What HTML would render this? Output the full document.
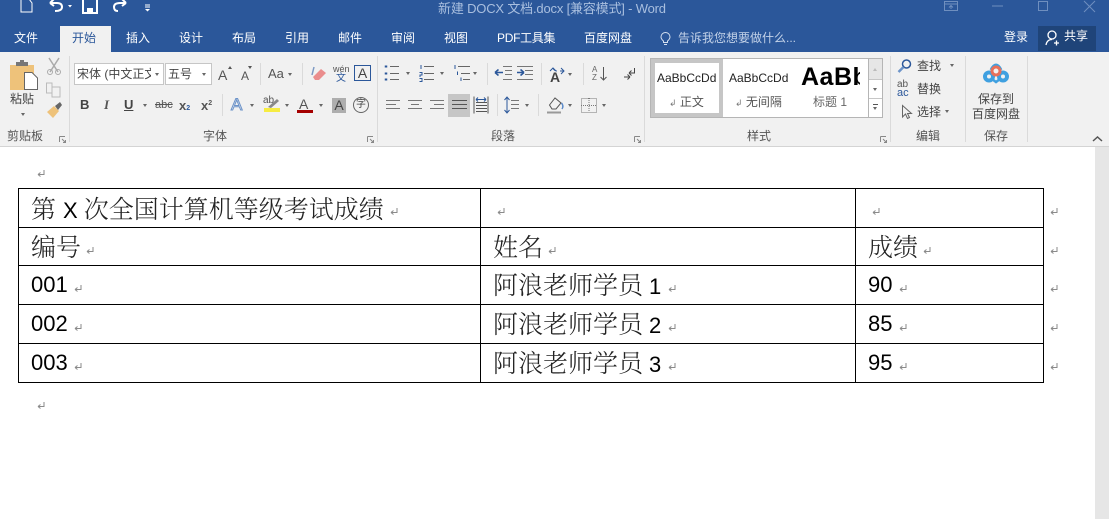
<!DOCTYPE html>
<html lang="zh"><head><meta charset="utf-8"><title>新建 DOCX 文档.docx - Word</title>
<style>
html,body{margin:0;padding:0}
body{width:1109px;height:519px;overflow:hidden;background:#fff;position:relative;font-family:"Liberation Sans","Noto Sans CJK SC",sans-serif;color:#444}
.t{position:absolute;white-space:nowrap;line-height:1}
.w{color:#fff;font-size:12px}
.l{color:#555;font-size:12px}
.d{position:absolute;background:#dadada;width:1px}
.a{position:absolute;width:0;height:0;border-left:2.5px solid transparent;border-right:2.5px solid transparent;border-top:3px solid #666}
.ln{position:absolute;background:#000}
.c{position:absolute;white-space:nowrap;line-height:1;color:#222;font-family:"Noto Serif CJK SC","Liberation Serif",serif;font-weight:300;font-size:25px}
.c b{font-weight:normal;font-family:"Liberation Sans",sans-serif;font-size:22px;color:#000}
svg{position:absolute;overflow:visible}
</style></head><body>
<div style="position:absolute;left:0;top:0;width:1109px;height:52px;background:#2b579a"></div>
<div style="position:absolute;left:60px;top:26px;width:51px;height:26px;background:#f1f1f1"></div>
<div style="position:absolute;left:0;top:52px;width:1109px;height:94px;background:#f1f1f1"></div>
<div style="position:absolute;left:0;top:146px;width:1109px;height:1px;background:#d4d4d4"></div>
<div style="position:absolute;left:1095px;top:147px;width:14px;height:372px;background:#e6e6e6"></div>

<svg style="left:0;top:0" width="1109" height="52" fill="none" stroke="#fff" stroke-width="1.5">
<path d="M21 -1V12H32V3L29 -1Z" stroke-width="1"/>
<path d="M50 3H57Q62 3 62 7Q62 11 55 11M50 3L54 -1M50 3L54 6" stroke-width="2"/>
<path d="M68 5H72L70 7.500Z" fill="#fff" stroke="none"/>
<path d="M83 -1H97V13H83Z" stroke-width="2"/><path d="M87 8H93V12H87Z" fill="#fff" stroke="none"/>
<path d="M126 3H120Q114 3 114 7Q114 11 118 11M126 3L122 -1M126 3L122 6" stroke-width="2"/>
<path d="M145 5H150M145 7H150" stroke-width="1"/><path d="M145 9H150L147.500 11.500Z" fill="#fff" stroke="none"/>
<g stroke="#6f8fbf" stroke-width="1">
<path d="M944.500 1.500H957.500V10.500H944.500ZM944.500 4H957.500M951 9V5.500M949 7.500L951 5.500L953 7.500"/>
<path d="M992 6H1003"/><path d="M1038.500 1.500H1047.500V10.500H1038.500Z"/><path d="M1084 1L1095 12M1095 1L1084 12"/>
</g></svg>

<div class="t" style="left:438px;top:2px;font-size:13px;color:#a9bfdf;letter-spacing:-.18px">新建 DOCX 文档.docx [兼容模式] - Word</div>

<div class="t w" style="left:14px;top:32px">文件</div>
<div class="t" style="left:72px;top:32px;font-size:12px;color:#2b579a">开始</div>
<div class="t w" style="left:126px;top:32px">插入</div>
<div class="t w" style="left:179px;top:32px">设计</div>
<div class="t w" style="left:232px;top:32px">布局</div>
<div class="t w" style="left:285px;top:32px">引用</div>
<div class="t w" style="left:338px;top:32px">邮件</div>
<div class="t w" style="left:391px;top:32px">审阅</div>
<div class="t w" style="left:444px;top:32px">视图</div>
<div class="t w" style="left:497px;top:32px;letter-spacing:-.3px">PDF工具集</div>
<div class="t w" style="left:584px;top:32px">百度网盘</div>
<svg style="left:660px;top:32px" width="12" height="14" fill="none" stroke="#d5e0f0" stroke-width="1"><path d="M3.500 9Q1 7 1 5A4.500 4.500 0 0 1 10 5Q10 7 7.500 9V10.500H3.500ZM4 12.500H7"/></svg>
<div class="t" style="left:678px;top:32px;font-size:12px;color:#c3d2e8">告诉我您想要做什么...</div>
<div class="t w" style="left:1004px;top:31px">登录</div>
<div style="position:absolute;left:1038px;top:26px;width:58px;height:25px;background:#1f4479"></div>
<svg style="left:1045px;top:30px" width="16" height="16" fill="none" stroke="#fff" stroke-width="1.300"><circle cx="7" cy="5" r="4"/><path d="M1 15Q2 9.500 7 9.500M9 13H14M11.500 10.500V15.500"/></svg>
<div class="t w" style="left:1064px;top:30px">共享</div>

<!-- clipboard -->
<svg style="left:0;top:52px" width="70" height="70" fill="none">
<path d="M10 13H34V38H10Z" fill="#eec27a"/><path d="M16 10H28V14H16Z" fill="#777"/><path d="M20 8H24V11H20Z" fill="#777"/>
<path d="M24.500 20.500H32L37.500 26V37.500H24.500Z" fill="#fff" stroke="#666"/>
<path d="M49 6L58 20M59 6L50 20" stroke="#aaa" stroke-width="1.500"/><circle cx="50" cy="20" r="2.500" stroke="#aaa"/><circle cx="58" cy="20" r="2.500" stroke="#aaa"/>
<path d="M46.500 31H52V41H46.500ZM52 35H60V45H52Z" stroke="#bbb"/>
<path d="M47 60L54 54L59 59L53 66Z" fill="#eec27a"/><path d="M55 54L60 50L62 53L58 58Z" fill="#666"/>
</svg>
<div class="t" style="left:10px;top:93px;font-size:12px;color:#444">粘贴</div>
<div class="a" style="left:21px;top:113px"></div>
<div class="t l" style="left:7px;top:130px">剪贴板</div>
<div class="d" style="left:69px;top:56px;height:86px"></div>

<!-- font -->
<div class="t" style="left:74px;top:63px;width:90px;height:22px;background:#fff;border:1px solid #c6c6c6;box-sizing:border-box"><div class="t" style="left:2px;top:3px;width:74px;overflow:hidden;font-size:12px;line-height:14px;color:#444">宋体 (中文正文</div><div class="a" style="left:80px;top:9px"></div></div>
<div class="t" style="left:165px;top:63px;width:47px;height:22px;background:#fff;border:1px solid #c6c6c6;box-sizing:border-box;font-size:12px;line-height:20px;padding-left:2px;color:#444">五号<div class="a" style="left:36px;top:9px"></div></div>
<div class="t" style="left:218px;top:68px;font-size:14px;color:#555">A</div>
<div class="t" style="left:241px;top:70px;font-size:12px;color:#555">A</div>
<svg style="left:228px;top:66px" width="25" height="6" fill="#555"><path d="M0 3L2 0L4 3ZM20 0L24 0L22 3Z"/></svg>
<div class="d" style="left:260px;top:63px;height:22px"></div>
<div class="t" style="left:268px;top:67px;font-size:13px;color:#555">Aa</div><div class="a" style="left:288px;top:73px"></div>
<div class="d" style="left:302px;top:63px;height:22px"></div>
<svg style="left:311px;top:66px" width="16" height="16"><path d="M2 11L10 3L15 7L8 14H4Z" fill="#ea8d8d"/><path d="M3 1L1 9" stroke="#7d9ac4" stroke-width="1.500"/></svg>
<div class="t" style="left:333px;top:65px;font-size:9px;color:#555">wén</div>
<div class="t" style="left:336px;top:74px;font-size:10px;color:#2b579a">文</div>
<div class="t" style="left:354px;top:65px;width:17px;height:16px;border:1px solid #2b579a;box-sizing:border-box;font-size:14px;line-height:14px;text-align:center;color:#444">A</div>

<div class="t" style="left:80px;top:98px;font-size:13px;font-weight:bold;color:#444">B</div>
<div class="t" style="left:104px;top:98px;font-size:13px;font-style:italic;font-family:'Liberation Serif',serif;font-weight:bold;color:#555">I</div>
<div class="t" style="left:124px;top:98px;font-size:13px;font-weight:bold;color:#444;text-decoration:underline">U</div><div class="a" style="left:143px;top:104px"></div>
<div class="t" style="left:155px;top:100px;font-size:11px;color:#555;text-decoration:line-through">abc</div>
<div class="t" style="left:179px;top:99px;font-size:13px;font-weight:bold;color:#555">x<span style="font-size:7px;color:#2b579a">2</span></div>
<div class="t" style="left:201px;top:99px;font-size:13px;font-weight:bold;color:#555">x<span style="font-size:7px;vertical-align:5px;color:#555">2</span></div>
<div class="d" style="left:222px;top:94px;height:22px"></div>
<div class="t" style="left:231px;top:96px;font-size:17px;color:#f1f1f1;-webkit-text-stroke:1px #6c93c9">A</div><div class="a" style="left:250px;top:104px"></div>
<div class="t" style="left:263px;top:96px;font-size:10px;color:#555">ab</div>
<svg style="left:263px;top:97px" width="18" height="17"><path d="M5 10L14 2L16 4L8 11Z" fill="#888"/><path d="M1 11H17V15H1Z" fill="#f6ec42"/></svg><div class="a" style="left:285px;top:104px"></div>
<div class="t" style="left:299px;top:97px;font-size:14px;color:#555">A</div><div style="position:absolute;left:297px;top:110px;width:16px;height:3px;background:#a50000"></div><div class="a" style="left:319px;top:104px"></div>
<div class="t" style="left:332px;top:98px;width:14px;height:15px;background:#aeaeae;font-size:14px;line-height:15px;text-align:center;color:#444">A</div>
<div class="t" style="left:353px;top:97px;width:16px;height:16px;border:1px solid #666;border-radius:50%;box-sizing:border-box;font-size:10px;line-height:14px;text-align:center;color:#444">字</div>
<div class="t l" style="left:203px;top:130px">字体</div>
<svg style="left:0;top:135px" width="1109" height="10" fill="none" stroke="#888"><path d="M59.500 1.500H65M59.500 1.500V7M62 4L65.500 7.500M65.500 5V7.500H63M367.500 1.500H373M367.500 1.500V7M370 4L373.500 7.500M373.500 5V7.500H371M634.500 1.500H640M634.500 1.500V7M637 4L640.500 7.500M640.500 5V7.500H638M880.500 1.500H886M880.500 1.500V7M883 4L886.500 7.500M886.500 5V7.500H884"/></svg>
<div class="d" style="left:377px;top:56px;height:86px"></div>

<!-- paragraph: absolute page coordinates -->
<div style="position:absolute;left:448px;top:94px;width:22px;height:23px;background:#c6c6c6"></div>
<svg style="left:0;top:0" width="1109" height="519" fill="none" stroke="#777" stroke-width="1">
<!-- bullets -->
<path d="M390 66.500H399M390 73.500H399M390 79.500H399" stroke="#666"/>
<path d="M386 65.500V67.500M386 72.500V74.500M386 78.500V80.500" stroke="#2b579a" stroke-width="2.500"/>
<!-- numbering -->
<path d="M424 66.500H434M424 73.500H434M424 79.500H434" stroke="#666"/>
<path d="M421 65V69M419.500 72.500H422V75H420V77M419.500 78.500H422V81.500H419.500" stroke="#2b579a"/>
<!-- multilevel -->
<path d="M458 66.500H470M461 73.500H470M463 79.500H470" stroke="#666"/>
<path d="M455 65V69M457.500 71.500V75M461 77.500V81" stroke="#2b579a"/>
<!-- indents -->
<path d="M503 66.500H512M505 70.500H512M505 74.500H512M503 79.500H512M517 66.500H533M525 70.500H533M525 74.500H533M517 79.500H533" stroke="#777"/>
<path d="M495 72.500H503M495 72.500L498.500 69.500M495 72.500L498.500 75.500M517 72.500H524M524 72.500L520.500 69.500M524 72.500L520.500 75.500" stroke="#2b579a" stroke-width="1.500"/>
<!-- asian layout arrows -->
<path d="M550 71L553 68L556 71M561 68L564 71L561 74M553 68Q554 71 557 71M564 71H560" stroke="#2b579a"/>
<!-- az sort -->
<path d="M603.500 67V80M600.500 77L603.500 80L606.500 77" stroke="#555"/>
<!-- ltr -->
<path d="M634.500 68V73H629M629 73L631.500 70.500M629 73L631.500 75.500M624 77H630M630 77L627.500 74.500M630 77L627.500 79.500" stroke="#444"/>
<!-- align -->
<path d="M386 100.500H400M386 104.500H396M386 108.500H400M408 100.500H422M411 104.500H419M408 108.500H422M430 100.500H444M434 104.500H444M430 108.500H444" stroke="#777"/>
<path d="M452 100.500H467M452 104.500H467M452 108.500H467" stroke="#555"/>
<path d="M474 96.500V113.500M488 96.500V113.500M476 102.500H487M476 105.500H487M476 108.500H487M476 111.500H487" stroke="#555"/>
<path d="M476 99.500H486M476 99.500L478 97.500M476 99.500L478 101.500M486 99.500L484 97.500M486 99.500L484 101.500" stroke="#2b579a"/>
<!-- line spacing -->
<path d="M511 100.500H519M511 104.500H519M511 108.500H519" stroke="#777"/>
<path d="M507 97V113M504.500 100L507 97L509.500 100M504.500 110L507 113L509.500 110" stroke="#2b579a"/>
<!-- shading -->
<path d="M549.500 105L555 98L561 103L556 109H552Z" stroke="#555"/><path d="M561.500 103Q564 106 562 109" stroke="#5b8ac9" stroke-width="1.500"/><path d="M547 112.500H561" stroke="#999" stroke-width="2"/>
<!-- borders -->
<path d="M581.500 98.500H596.500V112.500H581.500ZM589 98V113M581 105.500H597" stroke="#777" stroke-dasharray="1 1"/>
</svg>
<div class="a" style="left:406px;top:72px"></div><div class="a" style="left:440px;top:72px"></div><div class="a" style="left:473px;top:72px"></div>
<div class="d" style="left:487px;top:63px;height:22px"></div><div class="d" style="left:541px;top:63px;height:22px"></div><div class="d" style="left:583px;top:63px;height:22px"></div><div class="d" style="left:497px;top:94px;height:22px"></div><div class="d" style="left:538px;top:94px;height:22px"></div>
<div class="t" style="left:550px;top:70px;font-size:14px;font-weight:bold;color:#444">A</div><div class="a" style="left:568px;top:73px"></div>
<div class="t" style="left:592px;top:66px;font-size:8px;color:#666;line-height:8px">A<br>Z</div>
<div class="a" style="left:525px;top:104px"></div><div class="a" style="left:568px;top:104px"></div><div class="a" style="left:602px;top:104px"></div>
<div class="t l" style="left:491px;top:130px">段落</div>
<div class="d" style="left:644px;top:56px;height:86px"></div>

<!-- styles -->
<div style="position:absolute;left:650px;top:58px;width:233px;height:60px;background:#fff;border:1px solid #b5b5b5;box-sizing:border-box"></div>
<div style="position:absolute;left:651px;top:59px;width:72px;height:58px;border:4px solid #c6c6c6;box-sizing:border-box;background:#fff"></div>
<div class="t" style="left:657px;top:72px;font-size:12px;color:#222">AaBbCcDd</div>
<div class="t" style="left:729px;top:72px;font-size:12px;color:#222">AaBbCcDd</div>
<div style="position:absolute;left:801px;top:62px;width:59px;height:30px;overflow:hidden"><div class="t" style="left:0;top:3px;font-size:25px;font-weight:bold;color:#000;letter-spacing:.5px">AaBbC</div></div>
<div class="t" style="left:669px;top:96px;font-size:12px;color:#555"><span style="font-size:9px;color:#777">↲</span> 正文</div>
<div class="t" style="left:735px;top:96px;font-size:12px;color:#555"><span style="font-size:9px;color:#777">↲</span> 无间隔</div>
<div class="t" style="left:813px;top:96px;font-size:12px;color:#666">标题 1</div>
<div style="position:absolute;left:868px;top:58px;width:15px;height:60px;background:#fff;border:1px solid #b5b5b5;box-sizing:border-box"></div>
<div style="position:absolute;left:869px;top:59px;width:13px;height:20px;background:#e6e6e6"></div>
<div style="position:absolute;left:869px;top:79px;width:13px;height:1px;background:#c6c6c6"></div>
<div style="position:absolute;left:869px;top:98px;width:13px;height:1px;background:#c6c6c6"></div>
<div class="a" style="left:873px;top:68px;border-top:0;border-bottom:3px solid #bbb"></div>
<div class="a" style="left:873px;top:88px"></div>
<div style="position:absolute;left:873px;top:104px;width:5px;height:1px;background:#555"></div><div class="a" style="left:873px;top:107px"></div>
<div class="t l" style="left:747px;top:130px">样式</div>
<div class="d" style="left:890px;top:56px;height:86px"></div>

<!-- edit -->
<svg style="left:897px;top:58px" width="16" height="16" fill="none"><circle cx="9.500" cy="6" r="4" stroke="#2b579a" stroke-width="1.500"/><path d="M6.500 9L1.500 14" stroke="#6c93c9" stroke-width="2.500"/></svg>
<div class="t" style="left:917px;top:60px;font-size:12px;color:#444">查找</div><div class="a" style="left:950px;top:64px"></div>
<div class="t" style="left:897px;top:81px;font-size:10px;color:#555;line-height:8px">ab<br><span style="color:#2b579a;font-size:11px">ac</span></div>
<div class="t" style="left:917px;top:83px;font-size:12px;color:#444">替换</div>
<svg style="left:901px;top:104px" width="12" height="16" fill="none" stroke="#666"><path d="M1.500 1.500V13L4.500 10L6.500 14.500L8.500 13.500L6.500 9.500H10.500Z"/></svg>
<div class="t" style="left:917px;top:106px;font-size:12px;color:#444">选择</div><div class="a" style="left:945px;top:110px"></div>
<div class="t l" style="left:916px;top:130px">编辑</div>
<div class="d" style="left:965px;top:56px;height:86px"></div>

<!-- baidu -->
<svg style="left:975px;top:58px" width="42" height="32" fill="none">
<circle cx="14" cy="18.500" r="4" stroke="#3fa0e0" stroke-width="4"/><circle cx="28" cy="18.500" r="4" stroke="#3fa0e0" stroke-width="4"/>
<path d="M16 12Q21 2 26 12" stroke="#3fa0e0" stroke-width="3"/>
<circle cx="21" cy="13" r="4" stroke="#e8705a" stroke-width="3" fill="#f1f1f1"/>
<path d="M17 21L21 24L25 21" stroke="#3fa0e0" stroke-width="2.500"/>
</svg>
<div class="t" style="left:978px;top:93px;font-size:12px;color:#444">保存到</div>
<div class="t" style="left:972px;top:108px;font-size:12px;color:#444">百度网盘</div>
<div class="t l" style="left:984px;top:130px">保存</div>
<div class="d" style="left:1027px;top:56px;height:86px"></div>
<svg style="left:1092px;top:135px" width="12" height="8" fill="none" stroke="#555" stroke-width="1.500"><path d="M1 6L5.500 2L10 6"/></svg>

<!-- table -->
<div class="ln" style="left:18px;top:188px;width:1026px;height:1px"></div>
<div class="ln" style="left:18px;top:227px;width:1026px;height:1px"></div>
<div class="ln" style="left:18px;top:265px;width:1026px;height:1px"></div>
<div class="ln" style="left:18px;top:304px;width:1026px;height:1px"></div>
<div class="ln" style="left:18px;top:343px;width:1026px;height:1px"></div>
<div class="ln" style="left:18px;top:382px;width:1026px;height:1px"></div>
<div class="ln" style="left:18px;top:188px;width:1px;height:195px"></div>
<div class="ln" style="left:480px;top:188px;width:1px;height:195px"></div>
<div class="ln" style="left:855px;top:188px;width:1px;height:195px"></div>
<div class="ln" style="left:1043px;top:188px;width:1px;height:195px"></div>

<div class="c" style="left:31px;top:196px">第<b style="margin:0 6px 0 7px">X</b>次全国计算机等级考试成绩</div>
<div class="c" style="left:31px;top:234px">编号</div>
<div class="c" style="left:493px;top:234px">姓名</div>
<div class="c" style="left:868px;top:234px">成绩</div>
<div class="c" style="left:31px;top:270px"><b>001</b></div>
<div class="c" style="left:31px;top:309px"><b>002</b></div>
<div class="c" style="left:31px;top:348px"><b>003</b></div>
<div class="c" style="left:493px;top:272px">阿浪老师学员<b style="margin-left:6px">1</b></div>
<div class="c" style="left:493px;top:311px">阿浪老师学员<b style="margin-left:6px">2</b></div>
<div class="c" style="left:493px;top:350px">阿浪老师学员<b style="margin-left:6px">3</b></div>
<div class="c" style="left:868px;top:270px"><b>90</b></div>
<div class="c" style="left:868px;top:309px"><b>85</b></div>
<div class="c" style="left:868px;top:348px"><b>95</b></div>

<svg style="left:0;top:0" width="1109" height="519" fill="none" stroke="#8a8a8a" stroke-width="1">
<defs><path id="r" d="M7 0V4.500H1M1 4.500L3.500 2.500M1 4.500L3.500 6.500"/></defs>
<use href="#r" x="37" y="170"/><use href="#r" x="37" y="402"/>
<use href="#r" x="390" y="208"/><use href="#r" x="497" y="208"/><use href="#r" x="872" y="208"/><use href="#r" x="1050" y="208"/>
<use href="#r" x="86" y="247"/><use href="#r" x="548" y="247"/><use href="#r" x="923" y="247"/><use href="#r" x="1050" y="247"/>
<use href="#r" x="74" y="285"/><use href="#r" x="668" y="285"/><use href="#r" x="899" y="285"/><use href="#r" x="1050" y="285"/>
<use href="#r" x="74" y="324"/><use href="#r" x="668" y="324"/><use href="#r" x="899" y="324"/><use href="#r" x="1050" y="324"/>
<use href="#r" x="74" y="363"/><use href="#r" x="668" y="363"/><use href="#r" x="899" y="363"/><use href="#r" x="1050" y="363"/>
</svg>
</body></html>
